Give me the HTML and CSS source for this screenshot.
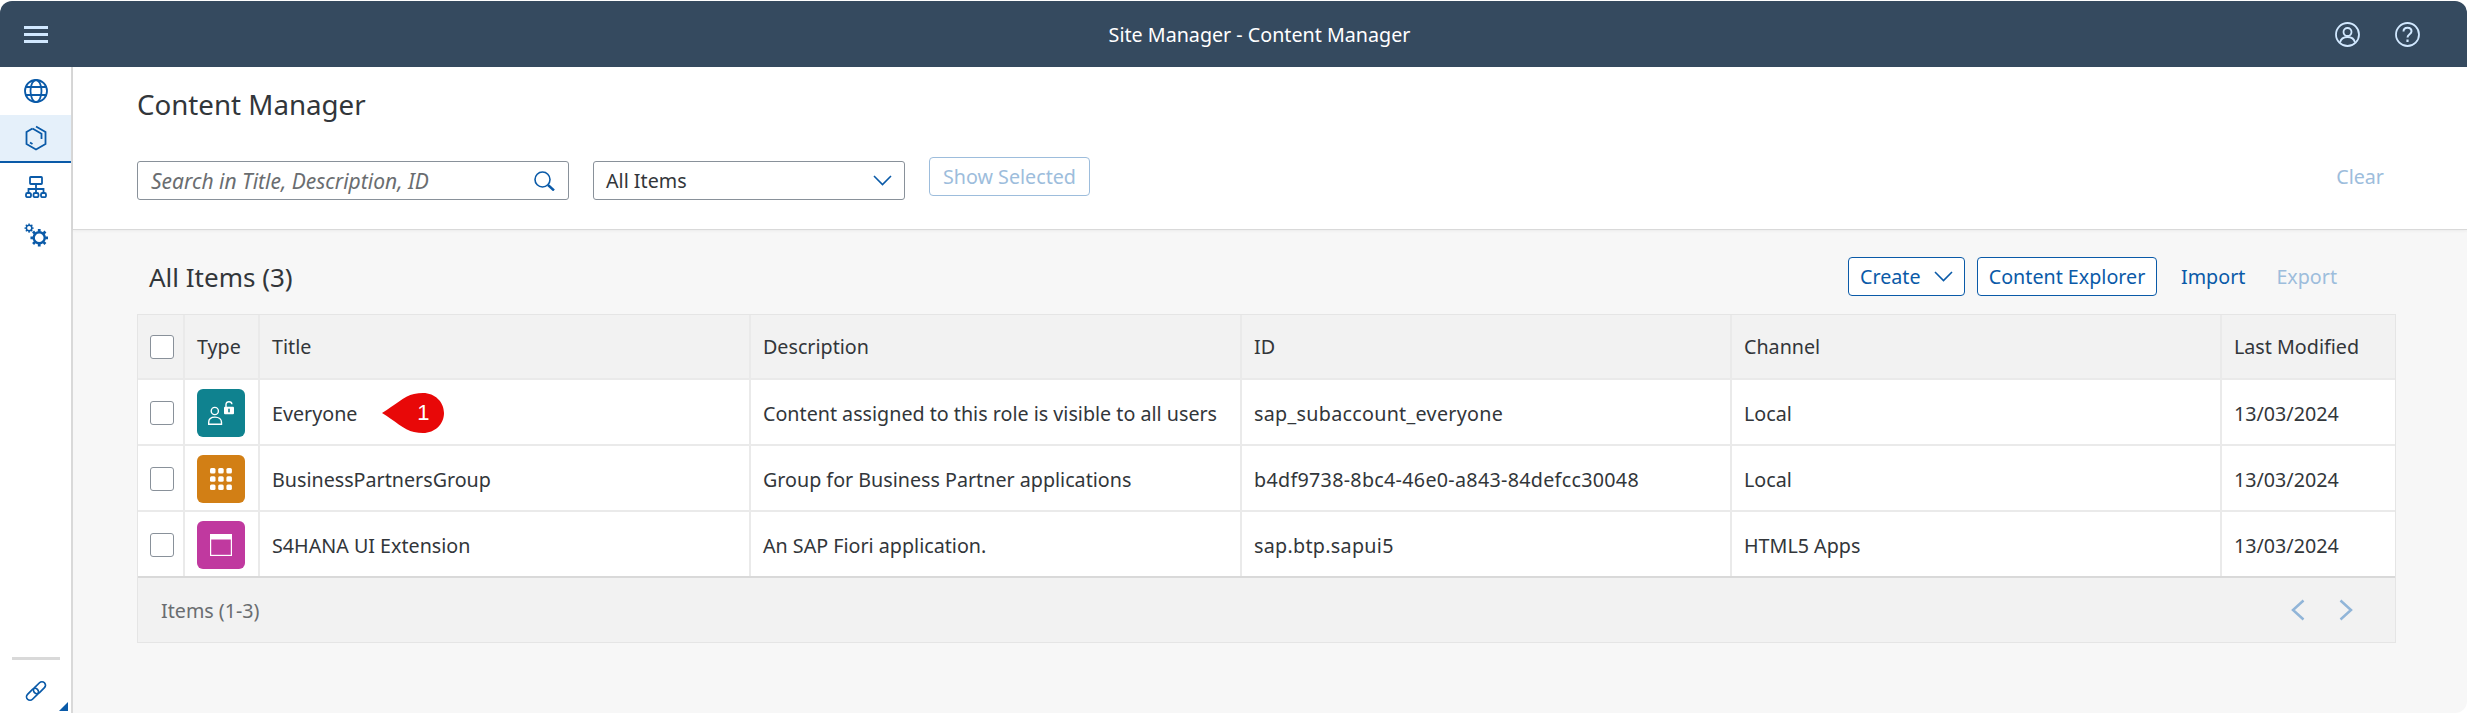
FILE: index.html
```html
<!doctype html>
<html lang="en">
<head>
    <meta charset="UTF-8">
    <title>Site Manager - Content Manager</title>
    <link rel="stylesheet" href="styles.css">
</head>
<body>
    <div class="window">
        <header class="shell">
            <svg class="burger" width="24" height="17" viewBox="0 0 24 17"><path d="M0 1.500h24M0 8.500h24M0 15.500h24" stroke="#d1e8ff" stroke-width="3"/></svg>
            <div class="shell-title">Site Manager - Content Manager</div>
            <div class="shell-icons">
                <svg width="25" height="25" viewBox="0 0 25 25" fill="none" stroke="#d1e8ff" stroke-width="1.800"><circle cx="12.500" cy="12.500" r="11.500"/><circle cx="12.500" cy="10" r="4"/><path d="M5 20.500c.8-3.500 3.600-5.500 7.500-5.500s6.700 2 7.500 5.500"/></svg>
                <svg width="25" height="25" viewBox="0 0 25 25" fill="none" stroke="#d1e8ff" stroke-width="1.800"><circle cx="12.500" cy="12.500" r="11.500"/><path d="M8.500 9.500c0-2.300 1.700-3.700 4-3.700s4 1.400 4 3.500c0 3-4 3-4 6.200" stroke-width="2"/><path d="M12.500 17.500v2.500" stroke-width="2.200"/></svg>
            </div>
        </header>
        <div class="main">
            <nav class="side">
                <div class="side-item">
                    <svg width="24" height="24" viewBox="0 0 24 24" fill="none" stroke="#0a5aa8" stroke-width="1.800"><circle cx="12" cy="12" r="11"/><ellipse cx="12" cy="12" rx="5.500" ry="11"/><path d="M2 8h20M2 16h20"/></svg>
                </div>
                <div class="side-item active">
                    <svg width="24" height="26" viewBox="0 0 24 26" fill="none" stroke="#0a5aa8" stroke-width="1.800"><path d="M12 1.500l9.500 5.500v12L12 24.500 2.500 19V7l6-3.500"/><path d="M8.500 3.500l9 5.200v5.300M6 17.500l2.500 1.500"/></svg>
                </div>
                <div class="side-item">
                    <svg width="22" height="22" viewBox="0 0 22 22" fill="none" stroke="#0a5aa8" stroke-width="1.800"><rect x="5" y="1" width="12" height="7" rx=".8"/><path d="M11 8v9M3.500 17v-4h15v4"/><rect x="1" y="17" width="5" height="4.200" rx="1.500"/><rect x="8.500" y="17" width="5" height="4.200" rx="1.500"/><rect x="16" y="17" width="5" height="4.200" rx="1.500"/></svg>
                </div>
                <div class="side-item">
                    <svg width="24" height="24" viewBox="0 0 26 26" fill="none" stroke="#0a5aa8"><circle cx="5.500" cy="5.500" r="3" stroke-width="1.700"/><path d="M5.500 .5v2M5.500 8.500v2M.5 5.500h2M8.500 5.500h2M2 2l1.400 1.400M7.600 7.600L9 9M2 9l1.400-1.400M7.600 3.400L9 2" stroke-width="1.500"/><circle cx="16.500" cy="16" r="6" stroke-width="2.600"/><path d="M16.500 6.500v3M16.500 22.500v3M7 16h3M23 16h3M9.800 9.300l2 2M21.200 20.700l2 2M9.800 22.700l2-2M21.200 11.300l2-2" stroke-width="3"/></svg>
                </div>
                <div class="side-bottom">
                    <div class="side-sep"></div>
                    <svg width="22" height="22" viewBox="0 0 22 22" fill="none" stroke="#0a5aa8" stroke-width="1.700"><rect x="7.500" y="4.200" width="14" height="7" rx="3.500" transform="rotate(-45 14.500 7.700)"/><rect x=".5" y="10.800" width="14" height="7" rx="3.500" transform="rotate(-45 7.500 14.300)"/></svg>
                    <div class="side-corner"></div>
                </div>
            </nav>
            <div class="page">
                <section class="page-head">
                    <h1>Content Manager</h1>
                    <div class="filters">
                        <div class="field search">
                            <span class="placeholder">Search in Title, Description, ID</span>
                            <svg width="21" height="20" viewBox="0 0 21 20" fill="none" stroke="#0a5aa8"><circle cx="8.500" cy="8.500" r="7.500" stroke-width="1.600"/><path d="M14 14l6 5.500" stroke-width="2.400"/></svg>
                        </div>
                        <div class="field select">
                            <span>All Items</span>
                            <svg width="19" height="11" viewBox="0 0 19 11" fill="none" stroke="#0a5aa8" stroke-width="1.600"><path d="M1 1l8.500 8.500L18 1"/></svg>
                        </div>
                        <button class="btn btn-off">Show Selected</button>
                        <span class="link link-off clear">Clear</span>
                    </div>
                </section>
                <section class="content">
                    <div class="toolbar">
                        <h2>All Items (3)</h2>
                        <div class="actions">
                            <button class="btn create">Create
                                <svg width="19" height="11" viewBox="0 0 19 11" fill="none" stroke="#0a5aa8" stroke-width="1.600"><path d="M1 1l8.500 8.500L18 1"/></svg>
                            </button>
                            <button class="btn explorer">Content Explorer</button>
                            <span class="link import">Import</span>
                            <span class="link link-off export">Export</span>
                        </div>
                    </div>
                    <div class="table">
                        <div class="row row-head">
                            <div class="cell"><span class="check"></span></div>
                            <div class="cell">Type</div>
                            <div class="cell">Title</div>
                            <div class="cell">Description</div>
                            <div class="cell">ID</div>
                            <div class="cell">Channel</div>
                            <div class="cell">Last Modified</div>
                        </div>
                        <div class="row">
                            <div class="cell"><span class="check"></span></div>
                            <div class="cell">
                                <span class="tile tile-teal">
                                    <svg width="26" height="24" viewBox="0 0 26 24" fill="none" stroke="#fff" stroke-width="1.400"><circle cx="6.800" cy="10" r="3.600"/><path d="M.7 23.300v-2c0-3 2.400-5.200 6.300-5.200s6.500 2.200 6.500 5.200v2z"/><path d="M18 6V3.500C18 1.600 19.400.7 21 .7s2.800 1 2.900 2.500"/><rect x="16" y="5.700" width="10" height="7.600" rx="1" fill="#fff" stroke="none"/><rect x="20.200" y="7.700" width="1.600" height="3.600" fill="#0f828f" stroke="none"/></svg>
                                </span>
                            </div>
                            <div class="cell">Everyone
                                <span class="marker">
                                    <svg width="62" height="40" viewBox="0 0 62 40"><path d="M0 20C12 13 22 3 32 1c3-.7 6-1 9-1 12 0 21 9 21 20s-9 20-21 20c-3 0-6-.3-9-1C22 37 12 27 0 20z" fill="#e80808"/></svg>
                                    <span class="marker-num">1</span>
                                </span>
                            </div>
                            <div class="cell">Content assigned to this role is visible to all users</div>
                            <div class="cell cell-id">sap_subaccount_everyone</div>
                            <div class="cell">Local</div>
                            <div class="cell">13/03/2024</div>
                        </div>
                        <div class="row">
                            <div class="cell"><span class="check"></span></div>
                            <div class="cell">
                                <span class="tile tile-orange">
                                    <svg width="22" height="22" viewBox="0 0 22 22" fill="#fff"><rect x="0" y="0" width="5.500" height="5.500" rx="1.500"/><rect x="8.200" y="0" width="5.500" height="5.500" rx="1.500"/><rect x="16.400" y="0" width="5.500" height="5.500" rx="1.500"/><rect x="0" y="8.200" width="5.500" height="5.500" rx="1.500"/><rect x="8.200" y="8.200" width="5.500" height="5.500" rx="1.500"/><rect x="16.400" y="8.200" width="5.500" height="5.500" rx="1.500"/><rect x="0" y="16.400" width="5.500" height="5.500" rx="1.500"/><rect x="8.200" y="16.400" width="5.500" height="5.500" rx="1.500"/><rect x="16.400" y="16.400" width="5.500" height="5.500" rx="1.500"/></svg>
                                </span>
                            </div>
                            <div class="cell">BusinessPartnersGroup</div>
                            <div class="cell">Group for Business Partner applications</div>
                            <div class="cell cell-id">b4df9738-8bc4-46e0-a843-84defcc30048</div>
                            <div class="cell">Local</div>
                            <div class="cell">13/03/2024</div>
                        </div>
                        <div class="row row-last">
                            <div class="cell"><span class="check"></span></div>
                            <div class="cell">
                                <span class="tile tile-pink">
                                    <svg width="22" height="22" viewBox="0 0 22 22" fill="none"><rect x=".6" y=".6" width="20.800" height="20.800" stroke="#fff" stroke-width="1.200"/><rect x="0" y="0" width="22" height="5.500" fill="#fff"/></svg>
                                </span>
                            </div>
                            <div class="cell">S4HANA UI Extension</div>
                            <div class="cell">An SAP Fiori application.</div>
                            <div class="cell cell-id">sap.btp.sapui5</div>
                            <div class="cell">HTML5 Apps</div>
                            <div class="cell">13/03/2024</div>
                        </div>
                        <div class="table-foot">
                            <span>Items (1-3)</span>
                            <div class="pager">
                                <svg width="14" height="22" viewBox="0 0 14 22" fill="none" stroke="#91b5d8" stroke-width="2.500"><path d="M12.500 1.500L2 11l10.500 9.500"/></svg>
                                <svg width="14" height="22" viewBox="0 0 14 22" fill="none" stroke="#91b5d8" stroke-width="2.500"><path d="M1.500 1.500L12 11 1.500 20.500"/></svg>
                            </div>
                        </div>
                    </div>
                </section>
            </div>
        </div>
    </div>
</body>
</html>
```

FILE: styles.css
```css
* {
    box-sizing: border-box;
}
html, body {
    margin: 0;
    height: 100%;
    background: #fff;
}
body {
    font-family: "Noto Sans", "Open Sans", sans-serif;
    font-size: 19.7px;
    color: #32363a;
    overflow: hidden;
}
h1, h2 {
    margin: 0;
    font-weight: 400;
}
.window {
    height: 713px;
    padding-top: 1px;
    display: flex;
    flex-direction: column;
    border-radius: 12px;
    overflow: hidden;
}

/* shell bar */
.shell {
    height: 66px;
    flex: none;
    background: #354a5f;
    border-radius: 12px 12px 0 0;
    display: flex;
    align-items: center;
    padding: 0 47px 0 24px;
    color: #fff;
}
.shell-title {
    flex: 1;
    text-align: center;
    padding-left: 136px;
}
.shell-icons {
    display: flex;
    gap: 35px;
}

/* left nav */
.main {
    flex: 1;
    display: flex;
    min-height: 0;
}
.side {
    width: 73px;
    flex: none;
    background: #fff;
    border-right: 2px solid #d9d9d9;
    display: flex;
    flex-direction: column;
}
.side-item {
    height: 48px;
    display: flex;
    align-items: center;
    justify-content: center;
}
.side-item.active {
    background: #e5f0fa;
    border-bottom: 2px solid #0a5aa8;
}
.side-bottom {
    margin-top: auto;
    height: 56px;
    position: relative;
    display: flex;
    flex-direction: column;
    align-items: center;
}
.side-sep {
    width: 48px;
    height: 3px;
    background: #d9d9d9;
    margin-bottom: 20px;
}
.side-corner {
    position: absolute;
    right: 3px;
    bottom: 2px;
    width: 0;
    height: 0;
    border-left: 9px solid transparent;
    border-bottom: 9px solid #0a5aa8;
}

/* page */
.page {
    flex: 1;
    display: flex;
    flex-direction: column;
    background: #f7f7f7;
    min-width: 0;
}
.page-head {
    height: 163px;
    flex: none;
    background: #fff;
    border-bottom: 1px solid #d9d9d9;
    box-shadow: 0 1px 3px rgba(0, 0, 0, 0.05);
    padding: 16px 83px 0 64px;
}
.page-head h1 {
    font-size: 27.7px;
    line-height: 42px;
}
.filters {
    display: flex;
    align-items: center;
    margin-top: 36px;
    height: 39px;
}
.field {
    height: 39px;
    background: #fff;
    border: 1px solid #89919a;
    border-radius: 3px;
    display: flex;
    align-items: center;
    justify-content: space-between;
}
.search {
    width: 432px;
    padding: 0 13px;
}
.placeholder {
    font-style: italic;
    font-size: 21px;
    color: #6a6d70;
}
.select {
    width: 312px;
    margin-left: 24px;
    padding: 0 12px;
}
.btn {
    height: 39px;
    font: inherit;
    color: #0a5aa8;
    background: #fff;
    border: 1px solid #0a5aa8;
    border-radius: 4px;
    padding: 0 11px;
    display: inline-flex;
    align-items: center;
    justify-content: center;
    white-space: nowrap;
}
.btn-off {
    width: 161px;
    color: #9dbddc;
    border-color: #9dbddc;
    margin: 0 0 8px 24px;
}
.link {
    color: #0a5aa8;
}
.link-off {
    color: #9dbddc;
}
.clear {
    margin: 0 0 8px auto;
}

/* list */
.content {
    flex: 1;
    padding: 0 71px 0 64px;
}
.toolbar {
    height: 84px;
    padding: 9px 59px 0 12px;
    display: flex;
    align-items: center;
    justify-content: space-between;
}
.toolbar h2 {
    font-size: 26px;
}
.actions {
    display: flex;
    align-items: center;
}
.create {
    width: 117px;
    justify-content: space-between;
}
.explorer {
    margin-left: 12px;
    width: 180px;
}
.import {
    margin-left: 24px;
}
.export {
    margin-left: 31px;
}
.table {
    border: 1px solid #e5e5e5;
}
.row {
    display: grid;
    grid-template-columns: 47px 75px 491px 491px 490px 490px 1fr;
    height: 66px;
    background: #fff;
}
.row .cell {
    padding-top: 2px;
}
.row-head {
    height: 65px;
    background: #f2f2f2;
}
.row-head .cell {
    padding-top: 0;
}
.row-last {
    border-bottom: 2px solid #d9d9d9;
}
.cell {
    display: flex;
    align-items: center;
    padding-left: 12px;
    border-right: 2px solid #eaeaea;
    border-bottom: 2px solid #eaeaea;
    white-space: nowrap;
    min-width: 0;
}
.cell-id {
    letter-spacing: 0.3px;
}
.row-last .cell {
    border-bottom: none;
}
.cell:last-child {
    border-right: none;
}
.check {
    width: 24px;
    height: 24px;
    background: #fff;
    border: 1px solid #89919a;
    border-radius: 3px;
}
.tile {
    width: 48px;
    height: 48px;
    border-radius: 6px;
    display: flex;
    align-items: center;
    justify-content: center;
}
.tile-teal {
    background: #0f828f;
}
.tile-orange {
    background: #d27f15;
}
.tile-pink {
    background: #c0399f;
}
.marker {
    position: relative;
    display: inline-flex;
    margin-left: 25px;
}
.marker-num {
    position: absolute;
    top: 0;
    bottom: 0;
    left: 25px;
    width: 32px;
    display: flex;
    align-items: center;
    justify-content: center;
    color: #fff;
    font-size: 22px;
    font-family: "Liberation Sans", sans-serif;
}
.table-foot {
    height: 64px;
    background: #f2f2f2;
    display: flex;
    align-items: center;
    justify-content: space-between;
    padding: 0 42px 0 23px;
    color: #6a6d70;
}
.pager {
    display: flex;
    gap: 34px;
}
```
